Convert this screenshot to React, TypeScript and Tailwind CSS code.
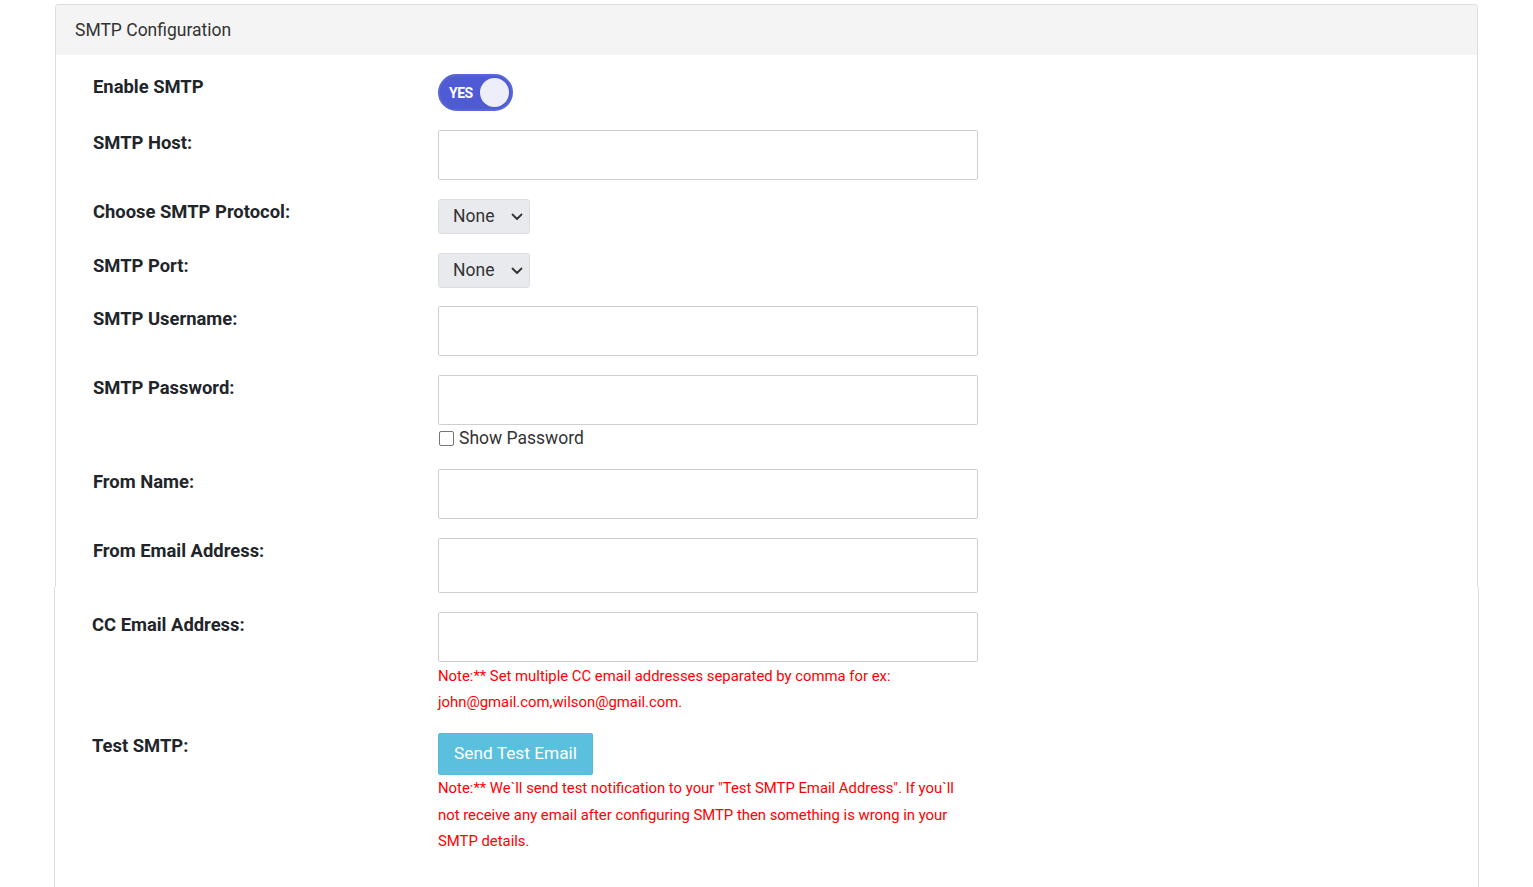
import React from "react";

const font = { fontFamily: "Roboto, 'Noto Sans', Arial, sans-serif" };

function Label({ children }: { children: React.ReactNode }) {
  return (
    <div className="w-[345px] shrink-0 pt-[1px] text-[18.4px] leading-[24px] font-bold text-[#212529]">
      {children}
    </div>
  );
}

function TextInput({ h = "h-[50px]" }: { h?: string }) {
  return (
    <input
      type="text"
      className={`block w-[540px] ${h} border border-[#cfcfcf] rounded-[2px] bg-white outline-none`}
    />
  );
}

function Select() {
  return (
    <div className="flex items-center justify-between w-[92px] h-[35px] bg-[#e9eaee] border border-[#dcdde2] rounded-[3px] pl-[14px] pr-[6px]">
      <span className="text-[17.5px] text-[#333]">None</span>
      <svg width="12" height="8" viewBox="0 0 12 8" fill="none">
        <path d="M1.5 1.5 L6 6 L10.5 1.5" stroke="#333" strokeWidth="1.8" strokeLinecap="round" strokeLinejoin="round" />
      </svg>
    </div>
  );
}

export default function App() {
  return (
    <div style={font} className="w-full h-[887px] overflow-hidden bg-white pt-[4px] px-[55px]">
      <div className="h-[583px] border border-b-0 border-[#dddddd] rounded-t-[4px]">
        <div className="h-[50px] bg-[#f4f4f4] rounded-t-[4px] flex items-center pl-[19px] text-[17.5px] text-[#333]">
          SMTP Configuration
        </div>
        <div className="pl-[37px] pt-[19px] flex flex-col gap-[19px]">
          <div className="flex">
            <Label>Enable SMTP</Label>
            <div className="relative w-[75px] h-[37px] rounded-full bg-[#4f5bd4] border-[2px] border-[#5966d8]">
              <span className="absolute left-[9px] top-[9px] text-[14px] leading-[16px] font-bold text-white tracking-[-0.5px]">YES</span>
              <span className="absolute right-[2px] top-[2px] w-[29px] h-[29px] rounded-full bg-[#eeeefb]" />
            </div>
          </div>
          <div className="flex">
            <Label>SMTP Host:</Label>
            <TextInput />
          </div>
          <div className="flex">
            <Label>Choose SMTP Protocol:</Label>
            <Select />
          </div>
          <div className="flex">
            <Label>SMTP Port:</Label>
            <Select />
          </div>
          <div className="flex -mt-px">
            <Label>SMTP Username:</Label>
            <TextInput />
          </div>
          <div className="flex">
            <Label>SMTP Password:</Label>
            <div>
              <TextInput />
              <label className="flex items-center h-[26px] gap-[5px] pl-px">
                <span className="w-[15px] h-[15px] border-[1.5px] border-[#767676] rounded-[2px] bg-white" />
                <span className="text-[17.5px] leading-[26px] text-[#333]">Show Password</span>
              </label>
            </div>
          </div>
          <div className="flex -mt-px">
            <Label>From Name:</Label>
            <TextInput />
          </div>
          <div className="flex">
            <Label>From Email Address:</Label>
            <TextInput h="h-[55px]" />
          </div>
        </div>
      </div>
      <div className="-mx-px h-[300px] border-x border-[#dddddd] pl-[37px] pt-[25px] flex flex-col gap-[18px]">
        <div className="flex">
          <div className="w-[346px] shrink-0 pt-[1px] text-[18.4px] leading-[24px] font-bold text-[#212529]">CC Email Address:</div>
          <div className="w-[540px]">
            <TextInput />
            <p className="text-[14.85px] leading-[26px] text-[#ff0000] pt-px">
              Note:** Set multiple CC email addresses separated by comma for ex: john@gmail.com,wilson@gmail.com.
            </p>
          </div>
        </div>
        <div className="flex">
          <div className="w-[346px] shrink-0 pt-[1px] text-[18.4px] leading-[24px] font-bold text-[#212529]">Test SMTP:</div>
          <div className="w-[540px]">
            <button className="h-[42px] px-[15px] bg-[#5bc0de] border border-[#56bad9] rounded-[2px] text-white text-[17.3px]">
              Send Test Email
            </button>
            <p className="text-[14.85px] leading-[26.5px] text-[#ff0000]">
              Note:** We`ll send test notification to your "Test SMTP Email Address". If you`ll not receive any email after configuring SMTP then something is wrong in your SMTP details.
            </p>
          </div>
        </div>
      </div>
    </div>
  );
}
